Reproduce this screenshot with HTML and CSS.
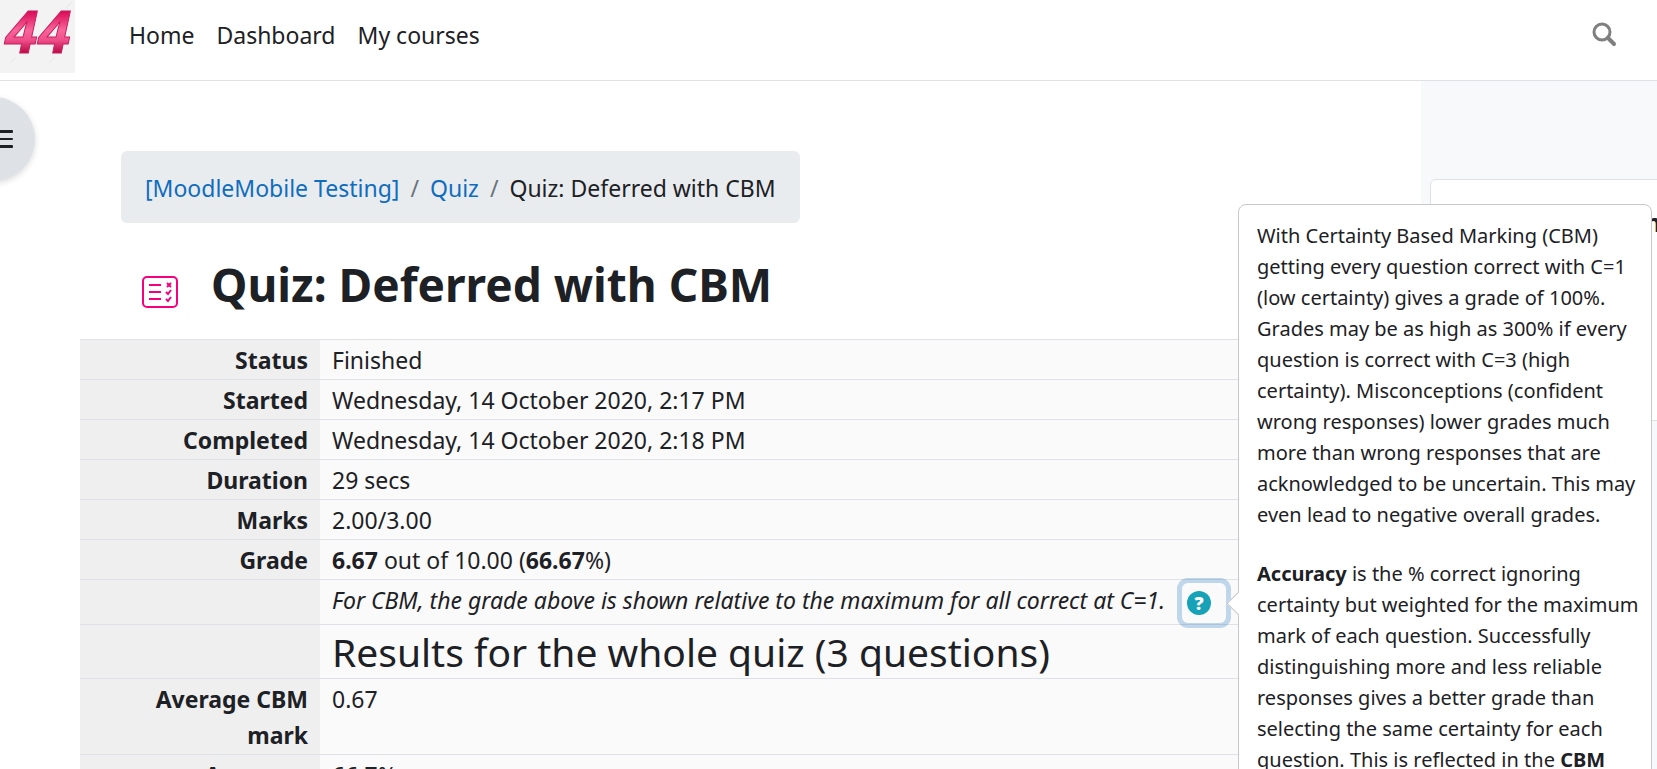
FILE: index.html
```html
<!DOCTYPE html>
<html lang="en">
<head>
    <meta charset="UTF-8">
    <title>Quiz: Deferred with CBM</title>
    <link rel="stylesheet" href="styles.css">
</head>
<body>

    <header class="navbar">
        <a class="logo" href="#" aria-label="Site home">
            <svg width="75" height="73" viewBox="0 0 75 73">
                <defs>
                    <linearGradient id="pink" x1="0" y1="0" x2="0" y2="1">
                        <stop offset="0.25" stop-color="#d8004f"/>
                        <stop offset="0.5" stop-color="#f8659a"/>
                        <stop offset="0.62" stop-color="#f0508c"/>
                        <stop offset="0.8" stop-color="#b3003c"/>
                    </linearGradient>
                </defs>
                <rect width="75" height="73" fill="#f3f3f3"/>
                <path d="M66 8l6-6M10 63l6-6M49 63l6-6" stroke="#e6e6e6"/>
                <text class="logo-text" x="5" y="53" fill="url(#pink)" stroke="#c8205f">44</text>
            </svg>
        </a>
        <nav class="main-nav">
            <a href="#">Home</a>
            <a href="#">Dashboard</a>
            <a href="#">My courses</a>
        </nav>
        <button class="search-btn" type="button" aria-label="Search">
            <svg width="26" height="26" viewBox="0 0 26 26" fill="none" stroke="#7f7f7f">
                <circle cx="11" cy="11" r="8" stroke-width="3"/>
                <path d="M17 17l6 6" stroke-width="4" stroke-linecap="round"/>
            </svg>
        </button>
    </header>

    <div class="page">
        <button class="drawer-toggle" type="button" aria-label="Open course index">
            <svg width="21" height="18" viewBox="0 0 21 18" fill="#1d2125">
                <rect width="21" height="3" rx="1"/>
                <rect y="8" width="21" height="2" rx="1"/>
                <rect y="15" width="21" height="3" rx="1"/>
            </svg>
        </button>

        <main class="content">
            <nav aria-label="Breadcrumb">
                <ol class="breadcrumb">
                    <li><a href="#">[MoodleMobile Testing]</a></li>
                    <li><a href="#">Quiz</a></li>
                    <li>Quiz: Deferred with CBM</li>
                </ol>
            </nav>

            <div class="page-title">
                <svg width="36" height="32" viewBox="0 0 36 32" fill="none" stroke="#f7007f" stroke-width="2">
                    <rect x="1" y="1" width="34" height="30" rx="4"/>
                    <path d="M7 9h12M7 16h12M7 23h12"/>
                    <path d="M25 7l4 4M29 7l-4 4M24 16l2 2 3-4M24 23l2 2 3-4"/>
                </svg>
                <h1>Quiz: Deferred with CBM</h1>
            </div>

            <table class="summary">
                <tr><th scope="row">Status</th><td>Finished</td></tr>
                <tr><th scope="row">Started</th><td>Wednesday, 14 October 2020, 2:17 PM</td></tr>
                <tr><th scope="row">Completed</th><td>Wednesday, 14 October 2020, 2:18 PM</td></tr>
                <tr><th scope="row">Duration</th><td>29 secs</td></tr>
                <tr><th scope="row">Marks</th><td>2.00/3.00</td></tr>
                <tr><th scope="row">Grade</th><td><b>6.67</b> out of 10.00 (<b>66.67</b>%)</td></tr>
                <tr>
                    <th></th>
                    <td>
                        <div class="note">
                            <i>For CBM, the grade above is shown relative to the maximum for all correct at C=1.</i>
                            <button class="help-btn" type="button" aria-label="Help"><span>?</span></button>
                        </div>
                    </td>
                </tr>
                <tr><th></th><td><h3>Results for the whole quiz (3 questions)</h3></td></tr>
                <tr><th scope="row">Average CBM mark</th><td>0.67</td></tr>
                <tr><th scope="row">Accuracy</th><td>66.7%</td></tr>
            </table>
        </main>

        <aside class="drawer">
            <section class="block">
                <h2>Quiz navigation</h2>
            </section>
        </aside>
    </div>

    <div class="popover" role="tooltip">
        <p>With Certainty Based Marking (CBM) getting every question correct with C=1 (low certainty) gives a grade of 100%. Grades may be as high as 300% if every question is correct with C=3 (high certainty). Misconceptions (confident wrong responses) lower grades much more than wrong responses that are acknowledged to be uncertain. This may even lead to negative overall grades.</p>
        <p><b>Accuracy</b> is the % correct ignoring certainty but weighted for the maximum mark of each question. Successfully distinguishing more and less reliable responses gives a better grade than selecting the same certainty for each question. This is reflected in the <b>CBM</b></p>
    </div>

</body>
</html>
```
FILE: styles.css
```css
* {
    box-sizing: border-box;
}
body {
    position: relative;
    display: flex;
    flex-direction: column;
    height: 100vh;
    margin: 0;
    overflow: hidden;
    background: #fff;
    color: #1d2125;
    font-family: "Segoe UI", "Noto Sans", sans-serif;
    font-size: 23px;
    line-height: 36px;
}
a {
    color: #0f6cbf;
    text-decoration: none;
}
button {
    padding: 0;
    border: none;
    background: none;
    font-family: inherit;
    cursor: pointer;
}

/* top bar */
.navbar {
    display: flex;
    flex: none;
    height: 81px;
    border-bottom: 1px solid #dee2e6;
}
.logo svg {
    display: block;
}
.logo-text {
    font-size: 60px;
    font-weight: bold;
    font-style: italic;
}
.main-nav {
    display: flex;
    gap: 22px;
    padding: 17px 0 0 54px;
}
.main-nav a {
    color: #1d2125;
}
.search-btn {
    display: flex;
    margin: 21px 40px 0 auto;
}

/* columns */
.page {
    position: relative;
    display: flex;
    flex: 1;
    min-height: 0;
}
.content {
    flex: 1;
    padding: 70px 80px 0;
}
.drawer {
    flex: none;
    width: 236px;
    padding: 98px 0 0 9px;
    overflow: hidden;
    background: #f8f9fb;
}
.block {
    width: 420px;
    height: 242px;
    padding: 22px 34px;
    border: 1px solid #dee2e6;
    border-radius: 6px;
    background: #fff;
}
.block h2 {
    margin: 0;
    font-size: 25px;
    line-height: 40px;
}
.drawer-toggle {
    position: absolute;
    top: 16px;
    left: -49px;
    display: flex;
    align-items: center;
    justify-content: flex-end;
    width: 84px;
    height: 84px;
    padding-right: 22px;
    border-radius: 50%;
    background: #dee2e6;
    box-shadow: 0 2px 6px rgba(0, 0, 0, 0.15);
}

/* heading */
.breadcrumb {
    display: flex;
    width: fit-content;
    margin: 0 0 0 41px;
    padding: 19px 24px 17px;
    border-radius: 6px;
    background: #e9ecef;
    list-style: none;
}
.breadcrumb li + li::before {
    content: "/";
    padding: 0 11px;
    color: #6a737b;
}
.page-title {
    display: flex;
    align-items: center;
    gap: 33px;
    padding: 31px 0 25px 62px;
}
.page-title svg {
    margin-top: 16px;
}
.page-title h1 {
    margin: 0;
    font-size: 46px;
    line-height: 60px;
}

/* attempt summary */
.summary {
    width: 100%;
    border-collapse: collapse;
}
.summary th,
.summary td {
    padding: 2px 12px 1px;
    border-top: 1px solid #dee2e6;
    vertical-align: top;
}
.summary th {
    width: 240px;
    background: #efefef;
    text-align: right;
}
.summary td {
    background: #fafafa;
}
.summary h3 {
    margin: 0;
    font-size: 39px;
    font-weight: normal;
    line-height: 50px;
}
.note {
    display: flex;
    align-items: flex-end;
    gap: 17px;
    height: 41px;
    white-space: nowrap;
}
.note i {
    align-self: flex-start;
}
.help-btn {
    display: flex;
    align-items: center;
    width: 44px;
    height: 40px;
    padding-left: 5px;
    border-radius: 6px;
    box-shadow: 0 0 0 5px rgba(15, 108, 191, 0.25);
}
.help-btn span {
    width: 24px;
    height: 24px;
    border-radius: 50%;
    background: #17a2b8;
    color: #fff;
    font-size: 18px;
    font-weight: 900;
    line-height: 24px;
    text-align: center;
}

/* help popover */
.popover {
    position: absolute;
    top: 204px;
    right: 5px;
    width: 414px;
    height: 900px;
    padding: 15px 8px 15px 18px;
    border: 1px solid #c8c8c8;
    border-radius: 8px;
    background: #fff;
    font-size: 20px;
    line-height: 31px;
}
.popover::before {
    content: "";
    position: absolute;
    top: 390px;
    left: -9px;
    width: 16px;
    height: 16px;
    border: 1px solid #c8c8c8;
    border-width: 0 0 1px 1px;
    background: #fff;
    transform: rotate(45deg);
}
.popover p {
    margin: 0 0 28px;
}
```
